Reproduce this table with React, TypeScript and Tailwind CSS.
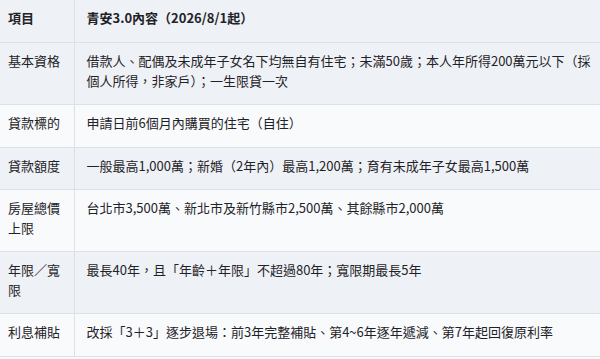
import React from "react";

const rows: [string, string][] = [
  ["基本資格", "借款人、配偶及未成年子女名下均無自有住宅；未滿50歲；本人年所得200萬元以下（採個人所得，非家戶）；一生限貸一次"],
  ["貸款標的", "申請日前6個月內購買的住宅（自住）"],
  ["貸款額度", "一般最高1,000萬；新婚（2年內）最高1,200萬；育有未成年子女最高1,500萬"],
  ["房屋總價上限", "台北市3,500萬、新北市及新竹縣市2,500萬、其餘縣市2,000萬"],
  ["年限／寬限", "最長40年，且「年齡＋年限」不超過80年；寬限期最長5年"],
  ["利息補貼", "改採「3＋3」逐步退場：前3年完整補貼、第4~6年逐年遞減、第7年起回復原利率"],
];

export default function App() {
  return (
    <div
      className="w-[600px] h-[359px] overflow-hidden bg-[#f8fafc] text-[13px] leading-[19.5px] text-[#1f2328]"
      style={{ fontFamily: '"Noto Sans CJK TC", "Noto Sans", sans-serif' }}
    >
      <table className="w-full border-collapse table-fixed">
        <colgroup>
          <col className="w-[74px]" />
          <col />
        </colgroup>
        <thead>
          <tr className="bg-[#eef1f5] border-b border-[#dde1e6]">
            <th className="text-left font-bold pl-2 pr-2 pt-2 pb-[14.5px] align-top border-r border-[#dde1e6]">項目</th>
            <th className="text-left font-bold pl-3 pr-1 pt-2 pb-[14.5px] align-top">青安3.0內容（2026/8/1起）</th>
          </tr>
        </thead>
        <tbody>
          {rows.map(([k, v], i) => (
            <tr
              key={k}
              className={(i % 2 === 0 ? "bg-[#eef1f5]" : "bg-[#f8fafc]") + " border-b border-[#dde1e6]"}
            >
              <td className="pl-2 pr-2 pt-2 pb-[14px] align-top border-r border-[#dde1e6]">{k}</td>
              <td className="pl-3 pr-1 pt-2 pb-[14px] align-top">{v}</td>
            </tr>
          ))}
        </tbody>
      </table>
    </div>
  );
}
